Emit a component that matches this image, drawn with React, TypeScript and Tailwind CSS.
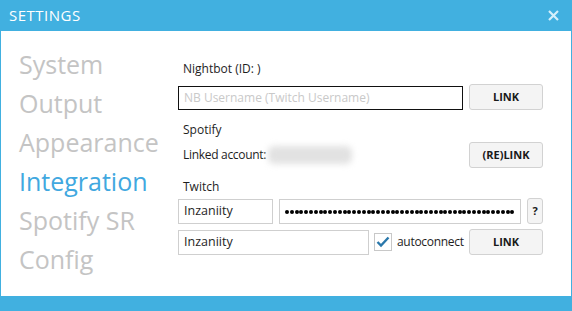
import React from 'react';

const navItems = ['System', 'Output', 'Appearance', 'Integration', 'Spotify SR', 'Config'];
const font = { fontFamily: '"Open Sans", "Noto Sans", sans-serif' };

function Button({ label, className = '' }: { label: string; className?: string }) {
  return (
    <div
      className={`flex items-center justify-center rounded-[3px] border border-[#d2d2d2] bg-[#f4f4f4] text-[11px] font-bold text-[#1a1a1a] ${className}`}
    >
      {label}
    </div>
  );
}

function Label({ children, className = '' }: { children: React.ReactNode; className?: string }) {
  return <div className={`flex h-[22px] items-center pl-[5px] text-[12px] text-[#1e1e1e] ${className}`}>{children}</div>;
}

export default function App() {
  return (
    <div className="flex h-[311px] w-[572px] flex-col bg-[#41b0e0]" style={font}>
      <div className="flex h-[31px] items-center justify-between pl-[9px] pr-[13px]">
        <span className="text-[15px] tracking-[0.5px] text-white">SETTINGS</span>
        <svg width="11" height="11" viewBox="0 0 11 11">
          <path d="M1 1 L10 10 M10 1 L1 10" stroke="#d4effb" strokeWidth="2.2" />
        </svg>
      </div>

      <div className="mx-px flex flex-1 bg-white">
        <div className="w-[177px] pl-[18px] pt-[14px]">
          {navItems.map((n) => (
            <div
              key={n}
              className={`h-[39px] text-[25px] leading-[39px] ${n === 'Integration' ? 'text-[#41a8e0]' : 'text-[#c4c4c4]'}`}
            >
              {n}
            </div>
          ))}
        </div>

        <div className="flex flex-col pt-[27px]">
          <Label>Nightbot (ID: )</Label>
          <div className="mt-[4px] flex h-[26px] items-end gap-[6px]">
            <div className="flex h-[24px] w-[285px] items-center border-[1.5px] border-[#111] pl-[5px] text-[12px] text-[#c9c9c9]">
              NB Username (Twitch Username)
            </div>
            <Button label="LINK" className="h-[26px] w-[74px] self-start" />
          </div>

          <Label className="mt-[9px]">Spotify</Label>
          <div className="mt-px flex h-[26px] items-center">
            <div className="w-[90px] whitespace-nowrap pl-[5px] text-[12px] tracking-[-0.3px] text-[#1e1e1e]">Linked account:</div>
            <div className="h-[18px] w-[84px] rounded-[6px] bg-[#e2e2e2] blur-[3px]" />
            <Button label="(RE)LINK" className="ml-auto h-[26px] w-[74px]" />
          </div>

          <Label className="mt-[8px]">Twitch</Label>
          <div className="flex h-[26px] items-end gap-[6px]">
            <div className="flex h-[25px] w-[95px] items-center border border-[#cfcfcf] pl-[5px] text-[12.5px] text-[#1e1e1e]">
              Inzaniity
            </div>
            <div className="flex h-[25px] w-[242px] items-center gap-[0.8px] overflow-hidden border border-[#cfcfcf] pl-[5px]">
              {Array.from({ length: 48 }).map((_, i) => (
                <span key={i} className="h-[4px] w-[4px] shrink-0 rounded-full bg-black" />
              ))}
            </div>
            <Button label="?" className="h-[26px] w-[16px]" />
          </div>
          <div className="mt-[5px] flex h-[26px] items-center">
            <div className="flex h-[25px] w-[191px] items-center self-end border border-[#cfcfcf] pl-[5px] text-[12.5px] text-[#1e1e1e]">
              Inzaniity
            </div>
            <div className="ml-[5px] flex h-[18px] w-[18px] items-center justify-center border border-[#c8c8c8] bg-white">
              <svg width="14" height="12" viewBox="0 0 14 12">
                <path d="M1.5 6 L5 9.5 L12.5 1.5" fill="none" stroke="#2a78ab" strokeWidth="2.4" />
              </svg>
            </div>
            <span className="ml-[5px] whitespace-nowrap text-[12px] tracking-[-0.3px] text-[#1e1e1e]">autoconnect</span>
            <Button label="LINK" className="ml-auto h-[26px] w-[74px]" />
          </div>
        </div>
      </div>

      <div className="h-[15px]" />
    </div>
  );
}
